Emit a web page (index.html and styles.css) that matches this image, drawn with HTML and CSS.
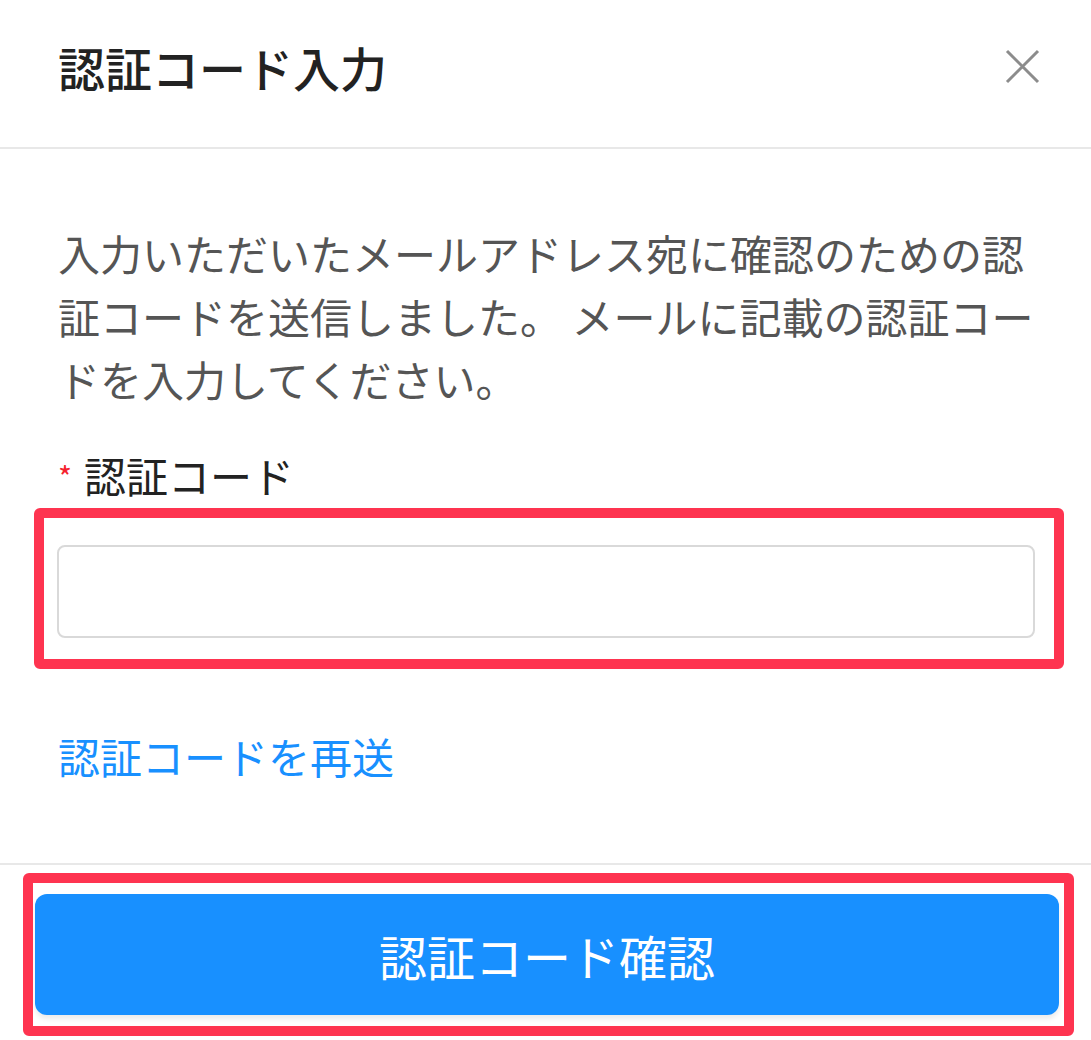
FILE: index.html
```html
<!DOCTYPE html>
<html lang="ja">
<head>
	<meta charset="UTF-8">
	<title>認証コード入力</title>
	<link rel="stylesheet" href="styles.css">
</head>
<body>
	<div class="modal">
		<div class="modal-header">
			<h1>認証コード入力</h1>
			<span class="close">
				<svg width="35" height="35" viewBox="0 0 35 35">
					<path d="M2 2L33 33M33 2L2 33" stroke="#8c8c8c" stroke-width="3" fill="none"/>
				</svg>
			</span>
		</div>
		<div class="modal-body">
			<p class="desc">入力いただいたメールアドレス宛に確認のための認証コードを送信しました。 メールに記載の認証コードを入力してください。</p>
			<label class="label"><span class="req">*</span>認証コード</label>
			<div class="field field-input">
				<input type="text" class="code-input">
				<div class="mark mark-input"></div>
			</div>
			<a class="resend" href="#">認証コードを再送</a>
		</div>
		<div class="modal-footer">
			<div class="field field-btn">
				<button class="btn">認証コード確認</button>
				<div class="mark mark-btn"></div>
			</div>
		</div>
	</div>
</body>
</html>
```

FILE: styles.css
```css
body {
	margin: 0;
	font-family: "Noto Sans CJK JP", "Noto Sans", sans-serif;
	background-color: #fff;
}

h1, p {
	margin: 0;
	padding: 0;
}

.modal {
	width: 1091px;
	min-height: 1040px;
}

.modal-header {
	height: 147px;
	padding: 0 51px 0 58px;
	display: flex;
	align-items: center;
	justify-content: space-between;
	border-bottom: 2px solid #e8e8e8;
}

.modal-header h1 {
	font-size: 47px;
	font-weight: 500;
	color: #222;
	line-height: 60px;
	margin-top: -14px;
}

.close {
	display: flex;
	margin-top: -14px;
}

.modal-body {
	padding: 72px 56px 79px 58px;
	display: flex;
	flex-direction: column;
}

.desc {
	font-size: 42px;
	line-height: 63px;
	color: #555;
}

.label {
	margin-top: 37px;
	font-size: 42px;
	line-height: 56px;
	color: #222;
}

.req {
	color: #f5222d;
	font-size: 30px;
	margin-right: 12px;
	vertical-align: 4px;
}

.field {
	position: relative;
}

.field-input {
	margin-top: 41px;
	height: 93px;
}

.code-input {
	box-sizing: border-box;
	display: block;
	width: 978px;
	height: 93px;
	margin: 0 0 0 -1px;
	border: 2px solid #d9d9d9;
	border-radius: 8px;
	background-color: #fff;
	outline: none;
}

.resend {
	margin-top: 90px;
	font-size: 42px;
	line-height: 56px;
	color: #1890ff;
	text-decoration: none;
	align-self: flex-start;
}

.modal-footer {
	border-top: 2px solid #e8e8e8;
	padding: 29px 32px 26px 35px;
}

.field-btn {
	height: 121px;
}

.btn {
	display: block;
	width: 1024px;
	height: 121px;
	margin: 0;
	padding: 0;
	border: none;
	border-radius: 12px;
	background-color: #1890ff;
	color: #fff;
	font-family: "Noto Sans CJK JP", "Noto Sans", sans-serif;
	font-size: 48px;
	box-shadow: 0 4px 5px rgba(0, 0, 0, 0.08);
}

/* annotation frames */
.mark {
	position: absolute;
	box-sizing: border-box;
	border: 10px solid #fe3450;
	border-radius: 6px;
	pointer-events: none;
}

.mark-input {
	top: -37px;
	left: -24px;
	width: 1030px;
	height: 161px;
}

.mark-btn {
	top: -21px;
	left: -12px;
	width: 1051px;
	height: 163px;
}
```
